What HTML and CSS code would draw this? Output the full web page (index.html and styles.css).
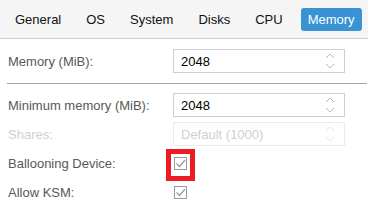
FILE: index.html
```html
<!DOCTYPE html>
<html lang="en">

<head>
  <meta charset="UTF-8" />
  <title>Memory</title>
  <link rel="stylesheet" href="styles.css">
</head>

<body>

  <div class="panel">
    <div class="tabs">
      <span class="tab">General</span>
      <span class="tab">OS</span>
      <span class="tab">System</span>
      <span class="tab">Disks</span>
      <span class="tab">CPU</span>
      <span class="tab active">Memory</span>
    </div>

    <div class="form">
      <div class="row">
        <label class="label">Memory (MiB):</label>
        <div class="field">
          <span>2048</span>
          <svg class="spin" width="10" height="18" viewBox="0 0 10 18"><path d="M1 6 L5 2 L9 6 M1 12 L5 16 L9 12" fill="none" stroke="#bbb" stroke-width="1"/></svg>
        </div>
      </div>

      <hr class="sep">

      <div class="row">
        <label class="label">Minimum memory (MiB):</label>
        <div class="field">
          <span>2048</span>
          <svg class="spin" width="10" height="18" viewBox="0 0 10 18"><path d="M1 6 L5 2 L9 6 M1 12 L5 16 L9 12" fill="none" stroke="#bbb" stroke-width="1"/></svg>
        </div>
      </div>
      <div class="row disabled">
        <label class="label">Shares:</label>
        <div class="field">
          <span>Default (1000)</span>
          <svg class="spin" width="10" height="18" viewBox="0 0 10 18"><path d="M1 6 L5 2 L9 6 M1 12 L5 16 L9 12" fill="none" stroke="#e4e4e4" stroke-width="1"/></svg>
        </div>
      </div>
      <div class="row">
        <label class="label">Ballooning Device:</label>
        <div class="check-wrap">
          <span class="check"><svg width="11" height="11" viewBox="0 0 11 11"><path d="M1.5 5.5 L4.5 8.5 L10 2" fill="none" stroke="#999" stroke-width="1.2"/></svg></span>
          <span class="highlight"></span>
        </div>
      </div>
      <div class="row">
        <label class="label">Allow KSM:</label>
        <div class="check-wrap">
          <span class="check"><svg width="11" height="11" viewBox="0 0 11 11"><path d="M1.5 5.5 L4.5 8.5 L10 2" fill="none" stroke="#999" stroke-width="1.2"/></svg></span>
        </div>
      </div>
    </div>
  </div>

</body>

</html>
```

FILE: styles.css
```css
body {
  margin: 0;
  font-family: "Liberation Sans", Arial, sans-serif;
  font-size: 13px;
  background: #fff;
}

.panel {
  width: 368px;
}

.tabs {
  display: flex;
  align-items: center;
  gap: 11px;
  height: 38px;
  padding: 0 0 0 8px;
  background: #f5f5f5;
  border-bottom: 1px solid #d0d0d0;
  box-sizing: content-box;
}

.tab {
  height: 23px;
  line-height: 23px;
  padding: 0 7px;
  color: #111;
  border-radius: 3px;
}

.tab.active {
  background: #3892d4;
  color: #fff;
}

.form {
  padding: 10px 0 0 8px;
}

.row {
  display: flex;
  align-items: center;
  height: 24px;
  margin-bottom: 5px;
}

.label {
  width: 165px;
  color: #585858;
}

.field {
  display: flex;
  align-items: center;
  justify-content: space-between;
  width: 172px;
  height: 24px;
  box-sizing: border-box;
  border: 1px solid #cfcfcf;
  padding: 0 9px 0 7px;
  color: #000;
}

.disabled .label,
.disabled .field {
  color: #cfcfcf;
}

.disabled .field {
  border-color: #ececec;
}

.sep {
  margin: 10px 0 9px -1px;
  width: 360px;
  border: 0;
  border-top: 1px solid #a6a6a6;
}

.check-wrap {
  position: relative;
  padding-left: 1px;
  height: 13px;
}

.row + .row + .row + .row {
  height: 25px;
  margin-bottom: 5px;
}

.check {
  display: flex;
  align-items: center;
  justify-content: center;
  width: 13px;
  height: 13px;
  box-sizing: border-box;
  border: 1px solid #9a9a9a;
}

.highlight {
  position: absolute;
  left: -7px;
  top: -8px;
  width: 29px;
  height: 32px;
  box-sizing: border-box;
  border: 5px solid #ed1c24;
}
```
